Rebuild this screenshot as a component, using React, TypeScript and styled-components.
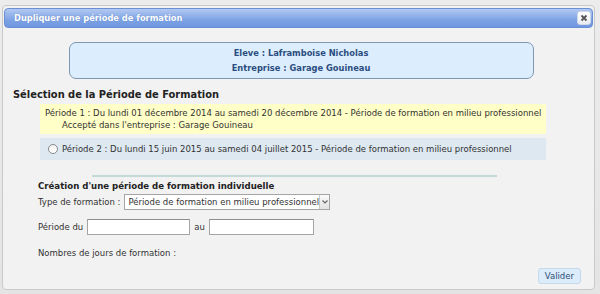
import React from 'react';
import styled, { createGlobalStyle } from 'styled-components';

const GlobalStyle = createGlobalStyle`
  html, body {
    margin: 0;
    padding: 0;
    background: #e6e6e6;
    font-family: "DejaVu Sans", Verdana, sans-serif;
    color: #333;
  }
`;

const Page = styled.div`
  width: 600px;
  height: 294px;
  padding: 5px 5px 4px 2px;
  box-sizing: border-box;
  background: linear-gradient(#ececec, #e4e4e4);
`;

const Dialog = styled.div`
  height: 100%;
  box-sizing: border-box;
  border: 1px solid #c9c9c9;
  border-radius: 4px;
  background: #f2f2f2;
  padding: 1px;
  display: flex;
  flex-direction: column;
`;

const TitleBar = styled.div`
  height: 20px;
  margin-top: 1px;
  box-sizing: border-box;
  border: 1px solid #6a8fd3;
  border-radius: 4px;
  background: linear-gradient(#b2c9f2, #7ea3e4 60%, #6f97e0);
  display: flex;
  align-items: center;
  justify-content: space-between;
  padding: 0 1px 0 9px;
`;

const Title = styled.span`
  color: #fff;
  font-weight: bold;
  font-size: 8.3px;
  text-shadow: 0 0 1px #5b7fc0;
`;

const CloseButton = styled.button`
  width: 14px;
  height: 14px;
  padding: 0;
  border: 1px solid #d0d8e8;
  border-radius: 3px;
  background: linear-gradient(#ffffff, #e8ecf2);
  display: flex;
  align-items: center;
  justify-content: center;
`;

const Body = styled.div`
  flex: 1;
  display: flex;
  flex-direction: column;
  padding: 14px 10px 0 9px;
`;

const InfoBox = styled.div`
  align-self: center;
  width: 465px;
  height: 37px;
  box-sizing: border-box;
  margin-left: 6px;
  border: 1px solid #7f97b3;
  border-radius: 7px;
  background: #dcedfd;
  display: flex;
  flex-direction: column;
  align-items: center;
  justify-content: center;
  gap: 5px;
  color: #2c4d80;
  font-weight: bold;
  font-size: 8.3px;
`;

const Heading = styled.h2`
  margin: 10px 0 0 0;
  font-size: 9.9px;
  font-weight: bold;
  color: #222;
`;

const PeriodList = styled.div`
  display: flex;
  flex-direction: column;
  gap: 4px;
  margin: 4px 37px 0 27px;
`;

const PeriodBox = styled.div<{ $selected?: boolean }>`
  background: ${p => (p.$selected ? '#ffffc7' : '#dde8f1')};
  padding: ${p => (p.$selected ? '3px 5px 3px 5px' : '5px 5px 5px 8px')};
  font-size: 8.5px;
  line-height: 12px;
  color: #333;
  white-space: nowrap;
  display: flex;
  align-items: center;
  gap: 4px;
`;

const PeriodText = styled.div`
  display: flex;
  flex-direction: column;
`;

const Indent = styled.span`
  padding-left: 17px;
`;

const Radio = styled.span`
  width: 8px;
  height: 8px;
  border: 1px solid #8a8a8a;
  border-radius: 50%;
  background: linear-gradient(#f4f4f4, #fff);
  flex-shrink: 0;
`;

const Divider = styled.div`
  margin: 15px 0 0 79px;
  width: 405px;
  height: 2px;
  background: #c3dad9;
`;

const Form = styled.div`
  display: flex;
  flex-direction: column;
  margin: 4px 0 0 25px;
  font-size: 8.5px;
  color: #333;
`;

const FormTitle = styled.div`
  font-weight: bold;
  color: #222;
  font-size: 8.6px;
`;

const Row = styled.div<{ $mt: number }>`
  display: flex;
  align-items: center;
  gap: 4px;
  margin-top: ${p => p.$mt}px;
  height: 16px;
  white-space: nowrap;
`;

const Select = styled.div`
  width: 206px;
  height: 16px;
  box-sizing: border-box;
  border: 1px solid #a5a5a5;
  background: #fff;
  display: flex;
  align-items: center;
  justify-content: space-between;
  padding-left: 3px;
  font-size: 8.5px;
`;

const SelectArrow = styled.span`
  width: 12px;
  height: 14px;
  border-left: 1px solid #c8c8c8;
  background: linear-gradient(#fafafa, #e2e2e2);
  display: flex;
  align-items: center;
  justify-content: center;
`;

const TextInput = styled.div<{ $w: number }>`
  width: ${p => p.$w}px;
  height: 16px;
  box-sizing: border-box;
  border: 1px solid #a5a5a5;
  border-top-color: #8e8e8e;
  background: #fff;
`;

const Footer = styled.div`
  display: flex;
  justify-content: flex-end;
  margin-top: auto;
  padding: 0 2px 4px 0;
`;

const Button = styled.button`
  height: 16px;
  padding: 0 6px;
  border: 1px solid #c5d9ec;
  border-radius: 3px;
  background: #dcecfa;
  color: #2e4e78;
  font-family: inherit;
  font-size: 8.5px;
`;

export default function App() {
  return (
    <Page>
      <GlobalStyle />
      <Dialog>
        <TitleBar>
          <Title>Dupliquer une période de formation</Title>
          <CloseButton>
            <svg width="8" height="8" viewBox="0 0 8 8">
              <path d="M1.5 1.5 L6.5 6.5 M6.5 1.5 L1.5 6.5" stroke="#555" strokeWidth="1.8" />
            </svg>
          </CloseButton>
        </TitleBar>
        <Body>
          <InfoBox>
            <span>Eleve : Laframboise Nicholas</span>
            <span>Entreprise : Garage Gouineau</span>
          </InfoBox>
          <Heading>Sélection de la Période de Formation</Heading>
          <PeriodList>
            <PeriodBox $selected>
              <PeriodText>
                <span>Période 1 : Du lundi 01 décembre 2014 au samedi 20 décembre 2014 - Période de formation en milieu professionnel</span>
                <Indent>Accepté dans l'entreprise : Garage Gouineau</Indent>
              </PeriodText>
            </PeriodBox>
            <PeriodBox>
              <Radio />
              <span>Période 2 : Du lundi 15 juin 2015 au samedi 04 juillet 2015 - Période de formation en milieu professionnel</span>
            </PeriodBox>
          </PeriodList>
          <Divider />
          <Form>
            <FormTitle>Création d'une période de formation individuelle</FormTitle>
            <Row $mt={3}>
              <span>Type de formation :</span>
              <Select>
                <span>Période de formation en milieu professionnel</span>
                <SelectArrow>
                  <svg width="6" height="4" viewBox="0 0 6 4">
                    <path d="M0.5 0.5 L3 3 L5.5 0.5" stroke="#666" strokeWidth="1.2" fill="none" />
                  </svg>
                </SelectArrow>
              </Select>
            </Row>
            <Row $mt={9}>
              <span>Période du</span>
              <TextInput $w={103} />
              <span>au</span>
              <TextInput $w={105} />
            </Row>
            <Row $mt={10}>
              <span>Nombres de jours de formation :</span>
            </Row>
          </Form>
          <Footer>
            <Button>Valider</Button>
          </Footer>
        </Body>
      </Dialog>
    </Page>
  );
}
